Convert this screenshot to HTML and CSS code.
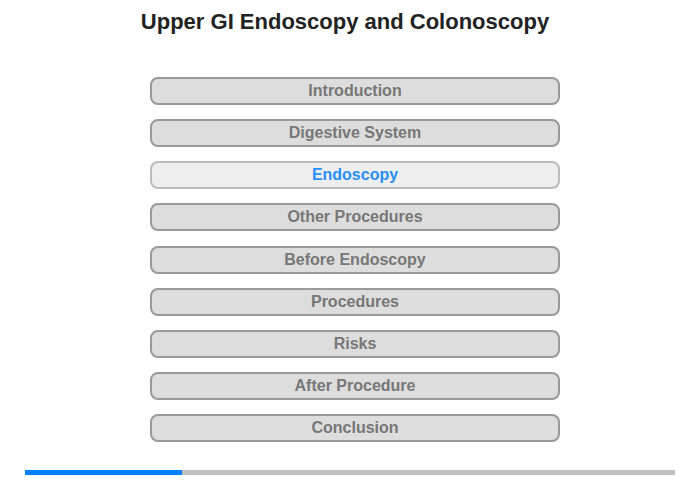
FILE: index.html
```
<!doctype html>
<html>
<head>
<meta charset="utf-8">
<title>Upper GI Endoscopy and Colonoscopy</title>
<link rel="stylesheet" href="styles.css">
</head>
<body>
<!--标题-->
<h1 class="title">Upper GI Endoscopy and Colonoscopy</h1>

<!--菜单-->
<div class="menu">
	<div class="item">Introduction</div>
	<div class="item">Digestive System</div>
	<div class="item active">Endoscopy</div>
	<div class="item">Other Procedures</div>
	<div class="item">Before Endoscopy</div>
	<div class="item">Procedures</div>
	<div class="item">Risks</div>
	<div class="item">After Procedure</div>
	<div class="item">Conclusion</div>
</div>

<!--进度条-->
<div class="progress">
	<div class="bar" style="width: 157px;"></div>
</div>
</body>
</html>
```
FILE: styles.css
```
body{
	margin: 0;
	font-family: "Liberation Sans", Arial, sans-serif;
	background: #fff;
}

.title{
	margin: 0;
	padding-top: 8px;
	height: 77px;
	box-sizing: border-box;
	font-size: 22px;
	line-height: 28px;
	text-align: center;
	padding-right: 10px;
	color: #222;
}

.menu{
	width: 410px;
	margin-left: 150px;
	display: flex;
	flex-direction: column;
	gap: 14.125px;
}

.item{
	height: 28px;
	box-sizing: border-box;
	border: 2px solid #999;
	border-radius: 8px;
	background: #ddd;
	color: #777;
	font-size: 16px;
	font-weight: bold;
	line-height: 24px;
	text-align: center;
}

.item.active{
	background: #eee;
	border-color: #bbb;
	color: #2a8ff7;
}

.progress{
	width: 650px;
	height: 5px;
	margin-left: 25px;
	margin-top: 28px;
	background: #c0c0c0;
}

.progress .bar{
	height: 5px;
	background: #0080ff;
}
```
